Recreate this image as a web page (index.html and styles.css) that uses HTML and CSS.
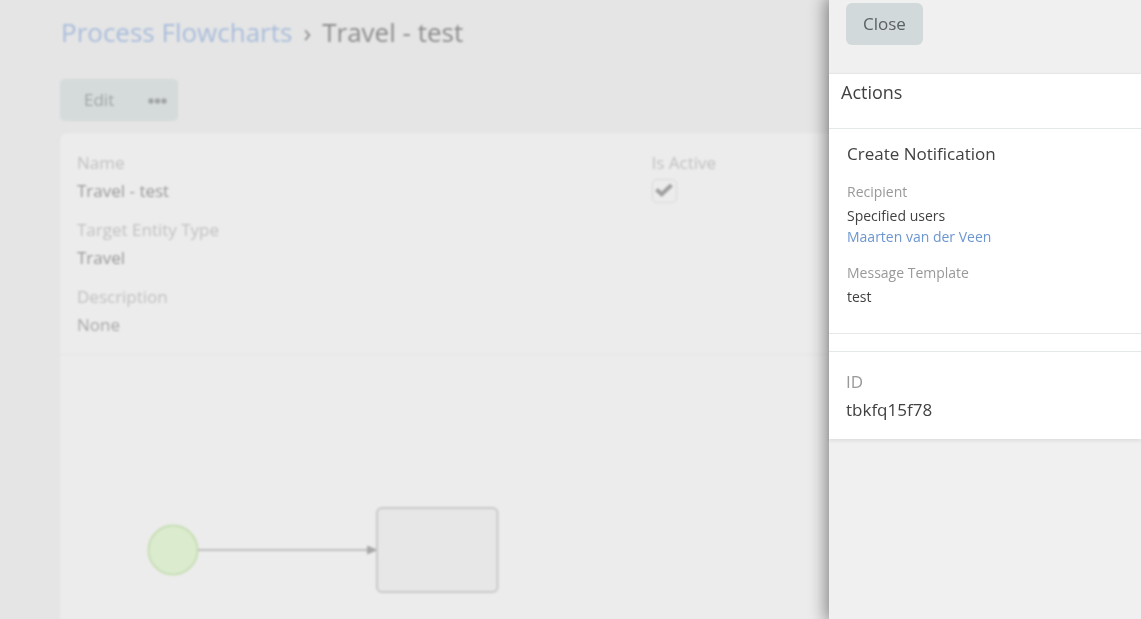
FILE: index.html
```
<!DOCTYPE html>
<html lang="en">
<head>
<meta charset="utf-8">
<meta name="viewport" content="width=device-width, initial-scale=1">
<title>Travel - test</title>
<link rel="stylesheet" href="styles.css">
</head>
<body>
<main class="page">
  <h1 class="breadcrumb"><a href="#">Process Flowcharts</a><span class="sep">›</span><span>Travel - test</span></h1>
  <div class="button-group">
    <button type="button" class="edit">Edit</button>
    <button type="button" class="more" aria-label="More actions">
      <svg width="20" height="8" viewBox="0 0 20 8" fill="currentColor" aria-hidden="true"><circle cx="3" cy="5" r="2.7"/><circle cx="9.5" cy="5" r="2.7"/><circle cx="16" cy="5" r="2.7"/></svg>
    </button>
  </div>
  <section class="card">
    <div class="fields">
      <div class="column">
        <div class="field"><div class="label">Name</div><div>Travel - test</div></div>
        <div class="field"><div class="label">Target Entity Type</div><div>Travel</div></div>
        <div class="field"><div class="label">Description</div><div class="none">None</div></div>
      </div>
      <div class="column">
        <div class="field">
          <label class="label" for="active">Is Active</label>
          <span class="check">
            <input type="checkbox" id="active" checked>
            <svg width="18" height="16" viewBox="0 0 18 16" fill="none" stroke="currentColor" stroke-width="4" aria-hidden="true"><path d="M1.500 6.500 6.700 11.200 16.500 2"/></svg>
          </span>
        </div>
      </div>
    </div>
    <svg class="flowchart" width="460" height="264" viewBox="0 0 460 264" role="img" aria-label="Start event connected to a task">
      <circle cx="113" cy="195" r="24.5" fill="#dbebce" stroke="#c8dfb6" stroke-width="2"/>
      <path d="M138 195H309" stroke="#bebebe" stroke-width="2"/>
      <path d="M307 190.5 318 195 307 199.5Z" fill="#a8a8a8"/>
      <rect x="317" y="153" width="120.500" height="84" rx="5" fill="#e7e7e7" stroke="#c9c9c9" stroke-width="2"/>
    </svg>
  </section>
</main>
<aside class="drawer">
  <header class="drawer-head"><button type="button" class="close">Close</button></header>
  <div class="panel">
    <h2>Actions</h2>
    <section class="action">
      <h3>Create Notification</h3>
      <div class="detail"><div class="label">Recipient</div><div>Specified users</div><a href="#">Maarten van der Veen</a></div>
      <div class="detail"><div class="label">Message Template</div><div>test</div></div>
    </section>
    <div class="field id"><div class="label">ID</div><div>tbkfq15f78</div></div>
  </div>
</aside>
</body>
</html>
```
FILE: styles.css
```
* { box-sizing: border-box; }
body {
  margin: 0;
  height: 100vh;
  overflow: hidden;
  background: #e5e5e5;
  font: 17px/24px "Open Sans", sans-serif;
}
h1, h2, h3 { margin: 0; font-weight: 400; }
a { text-decoration: none; }
button { border: 0; font: inherit; }

.page {
  display: flex;
  flex-direction: column;
  align-items: flex-start;
  min-height: calc(100vh + 8px);
  padding: 14px 0 0 60px;
  color: #989898;
  filter: blur(1px);
}
.breadcrumb {
  display: flex;
  gap: 11px;
  margin-bottom: 29px;
  padding-left: 1px;
  font-size: 26px;
  line-height: 36px;
  color: #8c8c8c;
}
.breadcrumb a { color: #a9bddb; }
.button-group {
  display: flex;
  height: 42px;
  margin-bottom: 12px;
  border-radius: 5px;
  background: #d5dada;
}
.button-group button { background: none; color: #a0a3a3; }
.edit { padding: 0 24px; }
.more { display: flex; align-items: center; padding: 0 10px; }
.card {
  flex: 1;
  align-self: stretch;
  border-radius: 8px 0 0;
  background: #ececec;
  box-shadow: 0 1px 4px rgba(0, 0, 0, .02);
}
.fields {
  display: grid;
  grid-template-columns: 54fr 46fr;
  padding: 18px 0 17px 17px;
  border-bottom: 1px solid #e4e4e4;
}
.column { display: flex; flex-direction: column; gap: 15px; }
.field { display: flex; flex-direction: column; gap: 4px; }
.page .label { color: #c1c1c1; }
.none { color: #a8a8a8; }
.check { display: grid; place-items: center; width: 25px; height: 24px; color: #a0a0a0; }
.check > * { grid-area: 1 / 1; }
.check input {
  appearance: none;
  width: 25px;
  height: 24px;
  margin: 0;
  border: 1px solid #d9d9d9;
  border-radius: 5px;
}
.check svg { pointer-events: none; }
.flowchart { display: block; }

.drawer {
  position: fixed;
  inset: 0 0 0 auto;
  width: 312px;
  background: #f0f0f0;
  color: #414141;
  box-shadow: 0 0 16px 3px rgba(0, 0, 0, .45);
}
.drawer-head { padding: 3px 17px 28px; }
.close {
  height: 42px;
  padding: 0 17px;
  border-radius: 6px;
  background: #d1d9da;
  color: #5c6060;
}
.panel {
  border-top: 1px solid #e6e6e6;
  background: #fff;
  box-shadow: 0 2px 4px rgba(0, 0, 0, .08);
}
.panel h2 { padding: 6px 12px 24px; font-size: 18px; }
.action {
  display: flex;
  flex-direction: column;
  gap: 15px;
  padding: 13px 18px 26px;
  border: solid #e5e8e8;
  border-width: 1px 0;
  font-size: 14px;
  line-height: 21px;
}
.action h3 { font-size: 17px; line-height: 24px; }
.detail .label { margin-bottom: 3px; }
.detail a { display: block; color: #6c96d0; }
.drawer .label { color: #999; }
.id { margin-top: 17px; padding: 18px 17px 17px; border-top: 1px solid #e5e8e8; }
```
